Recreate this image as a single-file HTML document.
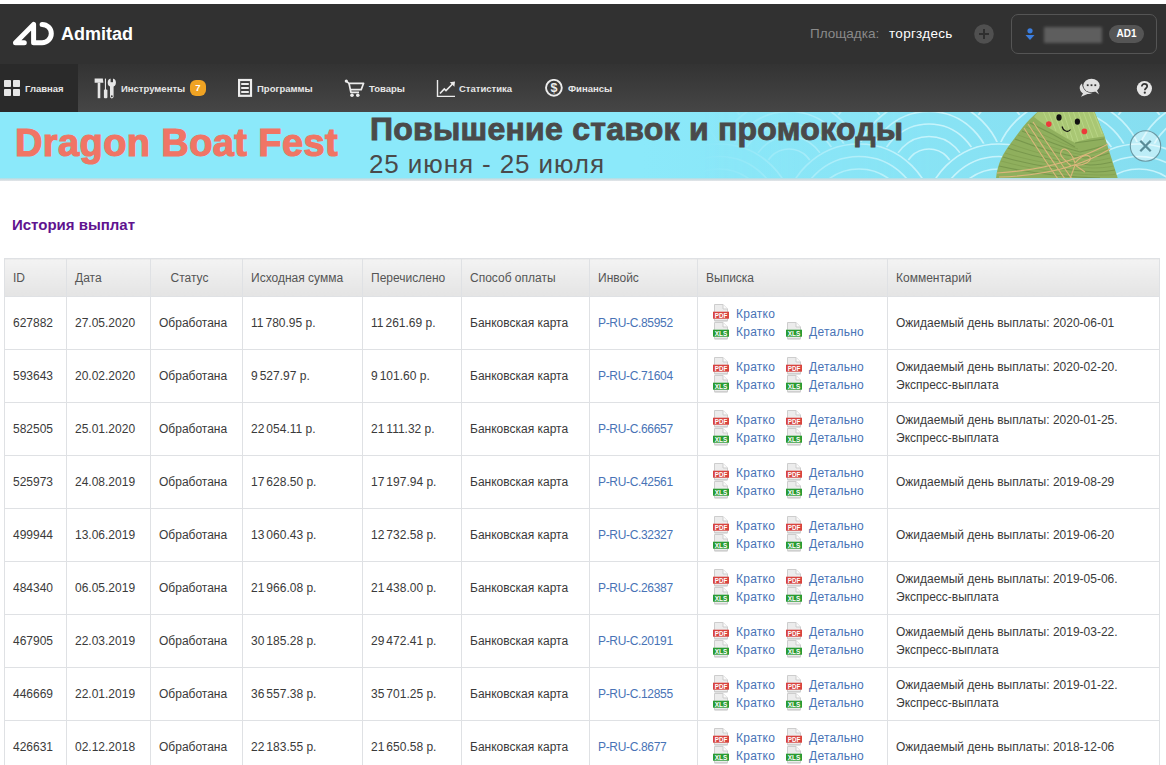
<!DOCTYPE html>
<html><head><meta charset="utf-8">
<style>
*{margin:0;padding:0;box-sizing:border-box}
html,body{width:1166px;height:765px;overflow:hidden;background:#fff;font-family:"Liberation Sans",sans-serif}
.abs{position:absolute;white-space:nowrap}
#top{position:absolute;left:0;top:4px;width:1166px;height:60px;background:#313131}
#nav{position:absolute;left:0;top:64px;width:1166px;height:48px;background:linear-gradient(#333,#464646)}
#navact{position:absolute;left:0;top:64px;width:78px;height:48px;background:#2a2a2a}
.nt{position:absolute;top:82.5px;font-size:9.5px;font-weight:bold;color:#e6e6e6;white-space:nowrap;line-height:12px}
#banner{position:absolute;left:0;top:112px;width:1166px;height:66px;background:#8be9fa;overflow:hidden}
#bline{position:absolute;left:0;top:178px;width:1166px;height:3px;background:linear-gradient(#a5e0ea,#d5dde1 60%,#e4e7ea)}
#title{position:absolute;left:12px;top:216px;font-size:15px;font-weight:bold;color:#60138f;white-space:nowrap}
table{position:absolute;left:4px;top:258px;border-collapse:collapse;font-size:12px;color:#3a3a3a}
td,th{border:1px solid #dfe1e4;padding:0 8px;text-align:left;font-weight:normal;white-space:nowrap}
th{height:38px;background:linear-gradient(#f3f3f3,#e4e4e4);color:#555}
th.c{padding-left:19.5px}
td{height:53px;line-height:18px}
a{color:#4873b6;text-decoration:none}
td>a{letter-spacing:-0.33px}
.ts{display:inline-block;width:2px}
td.vy{padding-left:15px}
.vl{height:18px;position:relative}
.vl span{position:absolute;top:0}
.vl .k{left:0}
.vl .d{left:73px}
.ic{position:absolute;left:0;top:-1px;width:16px;height:18px}
.vl a{position:absolute;left:23px;top:0;letter-spacing:0.25px}
</style></head><body>
<svg width="0" height="0" style="position:absolute"><defs>
<symbol id="pdf" viewBox="0 0 16 18"><path d="M1.5 0.5H10L14.5 5V16.8H1.5Z" fill="#ececec" stroke="#cdcdcd"/><path d="M10 0.5V5H14.5" fill="#fbfbfb" stroke="#cdcdcd"/><rect x="1.5" y="16.5" width="13" height="1" fill="#bbb" opacity="0.6"/><rect x="0" y="7.7" width="16" height="7" fill="#d8443f"/><text x="8" y="13.6" font-family="Liberation Sans" font-size="7" font-weight="bold" fill="#fff" text-anchor="middle" textLength="12.5" lengthAdjust="spacingAndGlyphs">PDF</text></symbol>
<symbol id="xls" viewBox="0 0 16 18"><path d="M1.5 0.5H10L14.5 5V16.8H1.5Z" fill="#ececec" stroke="#cdcdcd"/><path d="M10 0.5V5H14.5" fill="#fbfbfb" stroke="#cdcdcd"/><rect x="1.5" y="16.5" width="13" height="1" fill="#bbb" opacity="0.6"/><rect x="0" y="7.7" width="16" height="7" fill="#2a9b32"/><text x="8" y="13.6" font-family="Liberation Sans" font-size="7" font-weight="bold" fill="#fff" text-anchor="middle" textLength="12.5" lengthAdjust="spacingAndGlyphs">XLS</text></symbol>
</defs></svg>
<div id="top"></div>
<svg class="abs" style="left:0;top:0" width="60" height="60" viewBox="0 0 60 60"><path d="M24.3,42.8 L15.5,42.8 L33.6,24.4 L33.6,42.8 L42.1,42.8 A9.2,9.2 0 0 0 42.1,24.4" fill="none" stroke="#fff" stroke-width="5" stroke-linecap="round" stroke-linejoin="round"/></svg>
<div class="abs" style="left:61px;top:24px;font-size:18px;font-weight:bold;color:#fff;line-height:20px">Admitad</div>
<div class="abs" style="left:810px;top:27px;font-size:13.5px;color:#8a8a8a;line-height:14px">Площадка:</div>
<div class="abs" style="left:889px;top:27px;font-size:13.5px;color:#fff;line-height:14px;letter-spacing:0.3px">торгздесь</div>
<svg class="abs" style="left:974px;top:24px" width="20" height="20" viewBox="0 0 20 20"><circle cx="10" cy="10" r="9.8" fill="#505050"/><path d="M10 5V15M5 10H15" stroke="#2f2f2f" stroke-width="2"/></svg>
<div class="abs" style="left:1011px;top:14px;width:146px;height:40px;border:1px solid #555;border-radius:7px"></div>
<svg class="abs" style="left:1024px;top:26px" width="12" height="16" viewBox="0 0 12 16"><circle cx="6" cy="4.8" r="2.6" fill="#3b7ddd"/><path d="M1.5 8.9H10.5L6 14Z" fill="#3b7ddd"/></svg>
<div class="abs" style="left:1044px;top:27px;width:58px;height:16px;background:#5e5e5e;filter:blur(1.5px)"></div>
<div class="abs" style="left:1109px;top:25px;width:35px;height:18px;border-radius:9px;background:#555;color:#fff;font-size:10px;font-weight:bold;text-align:center;line-height:18px">AD1</div>

<div id="nav"></div>
<div id="navact"></div>
<svg class="abs" style="left:0;top:76px" width="24" height="24" viewBox="0 0 24 24" fill="#e6e6e6"><rect x="4" y="4" width="7" height="7" rx="0.8"/><rect x="13" y="4" width="7" height="7" rx="0.8"/><rect x="4" y="13" width="7" height="7" rx="0.8"/><rect x="13" y="13" width="7" height="7" rx="0.8"/></svg>
<div class="nt" style="left:25px">Главная</div>
<svg class="abs" style="left:92px;top:76px" width="26" height="24" viewBox="0 0 26 24" fill="#e6e6e6"><defs><mask id="wm"><rect width="26" height="24" fill="#fff"/><rect x="18.6" y="1" width="2.4" height="5.2" fill="#000"/><circle cx="19.8" cy="20.2" r="1" fill="#000"/></mask></defs><path d="M2.6 2.6H10.8L11.4 6.7H2.6Z"/><rect x="5.7" y="6.7" width="2.6" height="15.5"/><rect x="12.9" y="2.6" width="1.1" height="12"/><rect x="11.9" y="13.5" width="3.5" height="8.7" rx="1"/><g mask="url(#wm)"><circle cx="19.8" cy="6.7" r="4.1"/><rect x="18" y="8" width="3.6" height="14.4" rx="1.8"/></g></svg>
<div class="nt" style="left:121px">Инструменты</div>
<div class="abs" style="left:190px;top:80px;width:16px;height:16px;border-radius:6px;background:#f0a323;color:#fff;font-size:9.5px;font-weight:bold;text-align:center;line-height:16px">7</div>
<svg class="abs" style="left:236px;top:78px" width="18" height="20" viewBox="0 0 18 20"><rect x="3.1" y="2" width="11.9" height="15.8" fill="none" stroke="#ececec" stroke-width="2.2"/><path d="M5.2 5.9H12.8M5.2 10H12.8M5.2 14H12.8" stroke="#ececec" stroke-width="2"/></svg>
<div class="nt" style="left:257px">Программы</div>
<svg class="abs" style="left:344px;top:79px" width="21" height="19" viewBox="0 0 21 19"><g fill="none" stroke="#ececec" stroke-width="1.7" stroke-linejoin="round"><path d="M2.3 2.1L5 4.3H19.6L17.2 10.6H6.3"/><path d="M5 4.3L6.9 13.3H15"/></g><circle cx="2.3" cy="2.1" r="1.6" fill="#ececec"/><circle cx="8" cy="16.2" r="1.8" fill="#ececec"/><circle cx="13.8" cy="16.2" r="1.8" fill="#ececec"/></svg>
<div class="nt" style="left:369px">Товары</div>
<svg class="abs" style="left:436px;top:79px" width="20" height="19" viewBox="0 0 20 19"><path d="M1.5 1V17.4H19" fill="none" stroke="#ececec" stroke-width="1.4"/><path d="M4 14.5L8.3 9.9L10 11.6L16.5 5" fill="none" stroke="#ececec" stroke-width="1.6"/><path d="M13.8 3.2L19 2.6L18.4 7.8Z" fill="#ececec"/></svg>
<div class="nt" style="left:459px">Статистика</div>
<svg class="abs" style="left:544px;top:79px" width="20" height="19" viewBox="0 0 20 19"><circle cx="9.9" cy="8.8" r="7.9" fill="none" stroke="#ececec" stroke-width="1.9"/><text x="9.9" y="13.2" font-family="Liberation Sans" font-weight="bold" font-size="12.5" fill="#ececec" text-anchor="middle">$</text></svg>
<div class="nt" style="left:568px">Финансы</div>
<svg class="abs" style="left:1078px;top:78px" width="24" height="20" viewBox="0 0 24 20"><path d="M4 5.5C1.5 7 1 10 2.5 13C3.5 14.5 5 15.5 5 15.5L3 18.8L9.5 16C11.5 16 13 15.5 14.5 15C9 15 4.5 12 4 5.5Z" fill="#e0e0e0"/><ellipse cx="13.5" cy="7.5" rx="8.2" ry="6.8" fill="#e0e0e0"/><path d="M16 12.5L21 16.5L18.5 11.5Z" fill="#e0e0e0"/><rect x="8.8" y="6.3" width="1.8" height="1.8" fill="#333"/><rect x="12.6" y="6.3" width="1.8" height="1.8" fill="#333"/><rect x="16.4" y="6.3" width="1.8" height="1.8" fill="#333"/></svg>
<svg class="abs" style="left:1136px;top:80px" width="17" height="17" viewBox="0 0 17 17"><circle cx="8.4" cy="8.6" r="7.6" fill="#e6e6e6"/><path d="M5.8 6.6C5.8 4.9 7 3.9 8.5 3.9C10.1 3.9 11.2 4.9 11.2 6.3C11.2 8.2 8.8 8.3 8.8 10.3" fill="none" stroke="#333" stroke-width="1.7"/><circle cx="8.8" cy="12.7" r="1.1" fill="#333"/></svg>

<div id="banner">
<svg class="abs" style="left:0;top:0" width="1166" height="66" viewBox="0 112 1166 66">
<defs>
<linearGradient id="fadeg" x1="0" x2="1166" gradientUnits="userSpaceOnUse"><stop offset="0.6" stop-color="#fff" stop-opacity="0"/><stop offset="0.8" stop-color="#fff" stop-opacity="1"/></linearGradient>
<mask id="fadem"><rect x="0" y="100" width="1166" height="90" fill="url(#fadeg)"/></mask>
<linearGradient id="bgg" x1="0" x2="1166" gradientUnits="userSpaceOnUse"><stop offset="0.55" stop-color="#8be9fa"/><stop offset="1" stop-color="#86def0"/></linearGradient>
</defs>
<rect x="0" y="100" width="1166" height="90" fill="url(#bgg)"/>
<g mask="url(#fadem)"><circle cx="509" cy="84" r="77" fill="url(#bgg)"/><circle cx="509" cy="84" r="75" fill="none" stroke="#cdf5fc" stroke-width="1.7" stroke-opacity="0.9"/><circle cx="509" cy="84" r="62.5" fill="none" stroke="#cdf5fc" stroke-width="1.7" stroke-opacity="0.9"/><circle cx="509" cy="84" r="50" fill="none" stroke="#cdf5fc" stroke-width="1.7" stroke-opacity="0.9"/><circle cx="509" cy="84" r="37.5" fill="none" stroke="#cdf5fc" stroke-width="1.7" stroke-opacity="0.9"/><circle cx="509" cy="84" r="25" fill="none" stroke="#cdf5fc" stroke-width="1.7" stroke-opacity="0.9"/><circle cx="649" cy="84" r="77" fill="url(#bgg)"/><circle cx="649" cy="84" r="75" fill="none" stroke="#cdf5fc" stroke-width="1.7" stroke-opacity="0.9"/><circle cx="649" cy="84" r="62.5" fill="none" stroke="#cdf5fc" stroke-width="1.7" stroke-opacity="0.9"/><circle cx="649" cy="84" r="50" fill="none" stroke="#cdf5fc" stroke-width="1.7" stroke-opacity="0.9"/><circle cx="649" cy="84" r="37.5" fill="none" stroke="#cdf5fc" stroke-width="1.7" stroke-opacity="0.9"/><circle cx="649" cy="84" r="25" fill="none" stroke="#cdf5fc" stroke-width="1.7" stroke-opacity="0.9"/><circle cx="789" cy="84" r="77" fill="url(#bgg)"/><circle cx="789" cy="84" r="75" fill="none" stroke="#cdf5fc" stroke-width="1.7" stroke-opacity="0.9"/><circle cx="789" cy="84" r="62.5" fill="none" stroke="#cdf5fc" stroke-width="1.7" stroke-opacity="0.9"/><circle cx="789" cy="84" r="50" fill="none" stroke="#cdf5fc" stroke-width="1.7" stroke-opacity="0.9"/><circle cx="789" cy="84" r="37.5" fill="none" stroke="#cdf5fc" stroke-width="1.7" stroke-opacity="0.9"/><circle cx="789" cy="84" r="25" fill="none" stroke="#cdf5fc" stroke-width="1.7" stroke-opacity="0.9"/><circle cx="929" cy="84" r="77" fill="url(#bgg)"/><circle cx="929" cy="84" r="75" fill="none" stroke="#cdf5fc" stroke-width="1.7" stroke-opacity="0.9"/><circle cx="929" cy="84" r="62.5" fill="none" stroke="#cdf5fc" stroke-width="1.7" stroke-opacity="0.9"/><circle cx="929" cy="84" r="50" fill="none" stroke="#cdf5fc" stroke-width="1.7" stroke-opacity="0.9"/><circle cx="929" cy="84" r="37.5" fill="none" stroke="#cdf5fc" stroke-width="1.7" stroke-opacity="0.9"/><circle cx="929" cy="84" r="25" fill="none" stroke="#cdf5fc" stroke-width="1.7" stroke-opacity="0.9"/><circle cx="1069" cy="84" r="77" fill="url(#bgg)"/><circle cx="1069" cy="84" r="75" fill="none" stroke="#cdf5fc" stroke-width="1.7" stroke-opacity="0.9"/><circle cx="1069" cy="84" r="62.5" fill="none" stroke="#cdf5fc" stroke-width="1.7" stroke-opacity="0.9"/><circle cx="1069" cy="84" r="50" fill="none" stroke="#cdf5fc" stroke-width="1.7" stroke-opacity="0.9"/><circle cx="1069" cy="84" r="37.5" fill="none" stroke="#cdf5fc" stroke-width="1.7" stroke-opacity="0.9"/><circle cx="1069" cy="84" r="25" fill="none" stroke="#cdf5fc" stroke-width="1.7" stroke-opacity="0.9"/><circle cx="1209" cy="84" r="77" fill="url(#bgg)"/><circle cx="1209" cy="84" r="75" fill="none" stroke="#cdf5fc" stroke-width="1.7" stroke-opacity="0.9"/><circle cx="1209" cy="84" r="62.5" fill="none" stroke="#cdf5fc" stroke-width="1.7" stroke-opacity="0.9"/><circle cx="1209" cy="84" r="50" fill="none" stroke="#cdf5fc" stroke-width="1.7" stroke-opacity="0.9"/><circle cx="1209" cy="84" r="37.5" fill="none" stroke="#cdf5fc" stroke-width="1.7" stroke-opacity="0.9"/><circle cx="1209" cy="84" r="25" fill="none" stroke="#cdf5fc" stroke-width="1.7" stroke-opacity="0.9"/><circle cx="579" cy="129" r="77" fill="url(#bgg)"/><circle cx="579" cy="129" r="75" fill="none" stroke="#cdf5fc" stroke-width="1.7" stroke-opacity="0.9"/><circle cx="579" cy="129" r="62.5" fill="none" stroke="#cdf5fc" stroke-width="1.7" stroke-opacity="0.9"/><circle cx="579" cy="129" r="50" fill="none" stroke="#cdf5fc" stroke-width="1.7" stroke-opacity="0.9"/><circle cx="579" cy="129" r="37.5" fill="none" stroke="#cdf5fc" stroke-width="1.7" stroke-opacity="0.9"/><circle cx="579" cy="129" r="25" fill="none" stroke="#cdf5fc" stroke-width="1.7" stroke-opacity="0.9"/><circle cx="719" cy="129" r="77" fill="url(#bgg)"/><circle cx="719" cy="129" r="75" fill="none" stroke="#cdf5fc" stroke-width="1.7" stroke-opacity="0.9"/><circle cx="719" cy="129" r="62.5" fill="none" stroke="#cdf5fc" stroke-width="1.7" stroke-opacity="0.9"/><circle cx="719" cy="129" r="50" fill="none" stroke="#cdf5fc" stroke-width="1.7" stroke-opacity="0.9"/><circle cx="719" cy="129" r="37.5" fill="none" stroke="#cdf5fc" stroke-width="1.7" stroke-opacity="0.9"/><circle cx="719" cy="129" r="25" fill="none" stroke="#cdf5fc" stroke-width="1.7" stroke-opacity="0.9"/><circle cx="859" cy="129" r="77" fill="url(#bgg)"/><circle cx="859" cy="129" r="75" fill="none" stroke="#cdf5fc" stroke-width="1.7" stroke-opacity="0.9"/><circle cx="859" cy="129" r="62.5" fill="none" stroke="#cdf5fc" stroke-width="1.7" stroke-opacity="0.9"/><circle cx="859" cy="129" r="50" fill="none" stroke="#cdf5fc" stroke-width="1.7" stroke-opacity="0.9"/><circle cx="859" cy="129" r="37.5" fill="none" stroke="#cdf5fc" stroke-width="1.7" stroke-opacity="0.9"/><circle cx="859" cy="129" r="25" fill="none" stroke="#cdf5fc" stroke-width="1.7" stroke-opacity="0.9"/><circle cx="999" cy="129" r="77" fill="url(#bgg)"/><circle cx="999" cy="129" r="75" fill="none" stroke="#cdf5fc" stroke-width="1.7" stroke-opacity="0.9"/><circle cx="999" cy="129" r="62.5" fill="none" stroke="#cdf5fc" stroke-width="1.7" stroke-opacity="0.9"/><circle cx="999" cy="129" r="50" fill="none" stroke="#cdf5fc" stroke-width="1.7" stroke-opacity="0.9"/><circle cx="999" cy="129" r="37.5" fill="none" stroke="#cdf5fc" stroke-width="1.7" stroke-opacity="0.9"/><circle cx="999" cy="129" r="25" fill="none" stroke="#cdf5fc" stroke-width="1.7" stroke-opacity="0.9"/><circle cx="1139" cy="129" r="77" fill="url(#bgg)"/><circle cx="1139" cy="129" r="75" fill="none" stroke="#cdf5fc" stroke-width="1.7" stroke-opacity="0.9"/><circle cx="1139" cy="129" r="62.5" fill="none" stroke="#cdf5fc" stroke-width="1.7" stroke-opacity="0.9"/><circle cx="1139" cy="129" r="50" fill="none" stroke="#cdf5fc" stroke-width="1.7" stroke-opacity="0.9"/><circle cx="1139" cy="129" r="37.5" fill="none" stroke="#cdf5fc" stroke-width="1.7" stroke-opacity="0.9"/><circle cx="1139" cy="129" r="25" fill="none" stroke="#cdf5fc" stroke-width="1.7" stroke-opacity="0.9"/><circle cx="1279" cy="129" r="77" fill="url(#bgg)"/><circle cx="1279" cy="129" r="75" fill="none" stroke="#cdf5fc" stroke-width="1.7" stroke-opacity="0.9"/><circle cx="1279" cy="129" r="62.5" fill="none" stroke="#cdf5fc" stroke-width="1.7" stroke-opacity="0.9"/><circle cx="1279" cy="129" r="50" fill="none" stroke="#cdf5fc" stroke-width="1.7" stroke-opacity="0.9"/><circle cx="1279" cy="129" r="37.5" fill="none" stroke="#cdf5fc" stroke-width="1.7" stroke-opacity="0.9"/><circle cx="1279" cy="129" r="25" fill="none" stroke="#cdf5fc" stroke-width="1.7" stroke-opacity="0.9"/><circle cx="509" cy="174" r="77" fill="url(#bgg)"/><circle cx="509" cy="174" r="75" fill="none" stroke="#cdf5fc" stroke-width="1.7" stroke-opacity="0.9"/><circle cx="509" cy="174" r="62.5" fill="none" stroke="#cdf5fc" stroke-width="1.7" stroke-opacity="0.9"/><circle cx="509" cy="174" r="50" fill="none" stroke="#cdf5fc" stroke-width="1.7" stroke-opacity="0.9"/><circle cx="509" cy="174" r="37.5" fill="none" stroke="#cdf5fc" stroke-width="1.7" stroke-opacity="0.9"/><circle cx="509" cy="174" r="25" fill="none" stroke="#cdf5fc" stroke-width="1.7" stroke-opacity="0.9"/><circle cx="649" cy="174" r="77" fill="url(#bgg)"/><circle cx="649" cy="174" r="75" fill="none" stroke="#cdf5fc" stroke-width="1.7" stroke-opacity="0.9"/><circle cx="649" cy="174" r="62.5" fill="none" stroke="#cdf5fc" stroke-width="1.7" stroke-opacity="0.9"/><circle cx="649" cy="174" r="50" fill="none" stroke="#cdf5fc" stroke-width="1.7" stroke-opacity="0.9"/><circle cx="649" cy="174" r="37.5" fill="none" stroke="#cdf5fc" stroke-width="1.7" stroke-opacity="0.9"/><circle cx="649" cy="174" r="25" fill="none" stroke="#cdf5fc" stroke-width="1.7" stroke-opacity="0.9"/><circle cx="789" cy="174" r="77" fill="url(#bgg)"/><circle cx="789" cy="174" r="75" fill="none" stroke="#cdf5fc" stroke-width="1.7" stroke-opacity="0.9"/><circle cx="789" cy="174" r="62.5" fill="none" stroke="#cdf5fc" stroke-width="1.7" stroke-opacity="0.9"/><circle cx="789" cy="174" r="50" fill="none" stroke="#cdf5fc" stroke-width="1.7" stroke-opacity="0.9"/><circle cx="789" cy="174" r="37.5" fill="none" stroke="#cdf5fc" stroke-width="1.7" stroke-opacity="0.9"/><circle cx="789" cy="174" r="25" fill="none" stroke="#cdf5fc" stroke-width="1.7" stroke-opacity="0.9"/><circle cx="929" cy="174" r="77" fill="url(#bgg)"/><circle cx="929" cy="174" r="75" fill="none" stroke="#cdf5fc" stroke-width="1.7" stroke-opacity="0.9"/><circle cx="929" cy="174" r="62.5" fill="none" stroke="#cdf5fc" stroke-width="1.7" stroke-opacity="0.9"/><circle cx="929" cy="174" r="50" fill="none" stroke="#cdf5fc" stroke-width="1.7" stroke-opacity="0.9"/><circle cx="929" cy="174" r="37.5" fill="none" stroke="#cdf5fc" stroke-width="1.7" stroke-opacity="0.9"/><circle cx="929" cy="174" r="25" fill="none" stroke="#cdf5fc" stroke-width="1.7" stroke-opacity="0.9"/><circle cx="1069" cy="174" r="77" fill="url(#bgg)"/><circle cx="1069" cy="174" r="75" fill="none" stroke="#cdf5fc" stroke-width="1.7" stroke-opacity="0.9"/><circle cx="1069" cy="174" r="62.5" fill="none" stroke="#cdf5fc" stroke-width="1.7" stroke-opacity="0.9"/><circle cx="1069" cy="174" r="50" fill="none" stroke="#cdf5fc" stroke-width="1.7" stroke-opacity="0.9"/><circle cx="1069" cy="174" r="37.5" fill="none" stroke="#cdf5fc" stroke-width="1.7" stroke-opacity="0.9"/><circle cx="1069" cy="174" r="25" fill="none" stroke="#cdf5fc" stroke-width="1.7" stroke-opacity="0.9"/><circle cx="1209" cy="174" r="77" fill="url(#bgg)"/><circle cx="1209" cy="174" r="75" fill="none" stroke="#cdf5fc" stroke-width="1.7" stroke-opacity="0.9"/><circle cx="1209" cy="174" r="62.5" fill="none" stroke="#cdf5fc" stroke-width="1.7" stroke-opacity="0.9"/><circle cx="1209" cy="174" r="50" fill="none" stroke="#cdf5fc" stroke-width="1.7" stroke-opacity="0.9"/><circle cx="1209" cy="174" r="37.5" fill="none" stroke="#cdf5fc" stroke-width="1.7" stroke-opacity="0.9"/><circle cx="1209" cy="174" r="25" fill="none" stroke="#cdf5fc" stroke-width="1.7" stroke-opacity="0.9"/><circle cx="579" cy="219" r="77" fill="url(#bgg)"/><circle cx="579" cy="219" r="75" fill="none" stroke="#cdf5fc" stroke-width="1.7" stroke-opacity="0.9"/><circle cx="579" cy="219" r="62.5" fill="none" stroke="#cdf5fc" stroke-width="1.7" stroke-opacity="0.9"/><circle cx="579" cy="219" r="50" fill="none" stroke="#cdf5fc" stroke-width="1.7" stroke-opacity="0.9"/><circle cx="579" cy="219" r="37.5" fill="none" stroke="#cdf5fc" stroke-width="1.7" stroke-opacity="0.9"/><circle cx="579" cy="219" r="25" fill="none" stroke="#cdf5fc" stroke-width="1.7" stroke-opacity="0.9"/><circle cx="719" cy="219" r="77" fill="url(#bgg)"/><circle cx="719" cy="219" r="75" fill="none" stroke="#cdf5fc" stroke-width="1.7" stroke-opacity="0.9"/><circle cx="719" cy="219" r="62.5" fill="none" stroke="#cdf5fc" stroke-width="1.7" stroke-opacity="0.9"/><circle cx="719" cy="219" r="50" fill="none" stroke="#cdf5fc" stroke-width="1.7" stroke-opacity="0.9"/><circle cx="719" cy="219" r="37.5" fill="none" stroke="#cdf5fc" stroke-width="1.7" stroke-opacity="0.9"/><circle cx="719" cy="219" r="25" fill="none" stroke="#cdf5fc" stroke-width="1.7" stroke-opacity="0.9"/><circle cx="859" cy="219" r="77" fill="url(#bgg)"/><circle cx="859" cy="219" r="75" fill="none" stroke="#cdf5fc" stroke-width="1.7" stroke-opacity="0.9"/><circle cx="859" cy="219" r="62.5" fill="none" stroke="#cdf5fc" stroke-width="1.7" stroke-opacity="0.9"/><circle cx="859" cy="219" r="50" fill="none" stroke="#cdf5fc" stroke-width="1.7" stroke-opacity="0.9"/><circle cx="859" cy="219" r="37.5" fill="none" stroke="#cdf5fc" stroke-width="1.7" stroke-opacity="0.9"/><circle cx="859" cy="219" r="25" fill="none" stroke="#cdf5fc" stroke-width="1.7" stroke-opacity="0.9"/><circle cx="999" cy="219" r="77" fill="url(#bgg)"/><circle cx="999" cy="219" r="75" fill="none" stroke="#cdf5fc" stroke-width="1.7" stroke-opacity="0.9"/><circle cx="999" cy="219" r="62.5" fill="none" stroke="#cdf5fc" stroke-width="1.7" stroke-opacity="0.9"/><circle cx="999" cy="219" r="50" fill="none" stroke="#cdf5fc" stroke-width="1.7" stroke-opacity="0.9"/><circle cx="999" cy="219" r="37.5" fill="none" stroke="#cdf5fc" stroke-width="1.7" stroke-opacity="0.9"/><circle cx="999" cy="219" r="25" fill="none" stroke="#cdf5fc" stroke-width="1.7" stroke-opacity="0.9"/><circle cx="1139" cy="219" r="77" fill="url(#bgg)"/><circle cx="1139" cy="219" r="75" fill="none" stroke="#cdf5fc" stroke-width="1.7" stroke-opacity="0.9"/><circle cx="1139" cy="219" r="62.5" fill="none" stroke="#cdf5fc" stroke-width="1.7" stroke-opacity="0.9"/><circle cx="1139" cy="219" r="50" fill="none" stroke="#cdf5fc" stroke-width="1.7" stroke-opacity="0.9"/><circle cx="1139" cy="219" r="37.5" fill="none" stroke="#cdf5fc" stroke-width="1.7" stroke-opacity="0.9"/><circle cx="1139" cy="219" r="25" fill="none" stroke="#cdf5fc" stroke-width="1.7" stroke-opacity="0.9"/><circle cx="1279" cy="219" r="77" fill="url(#bgg)"/><circle cx="1279" cy="219" r="75" fill="none" stroke="#cdf5fc" stroke-width="1.7" stroke-opacity="0.9"/><circle cx="1279" cy="219" r="62.5" fill="none" stroke="#cdf5fc" stroke-width="1.7" stroke-opacity="0.9"/><circle cx="1279" cy="219" r="50" fill="none" stroke="#cdf5fc" stroke-width="1.7" stroke-opacity="0.9"/><circle cx="1279" cy="219" r="37.5" fill="none" stroke="#cdf5fc" stroke-width="1.7" stroke-opacity="0.9"/><circle cx="1279" cy="219" r="25" fill="none" stroke="#cdf5fc" stroke-width="1.7" stroke-opacity="0.9"/></g>
<g>
<path d="M1038.5 111H1094.2L1104.6 136.6L1118 179H996C997 165 1003 153 1011 143C1017 135 1023 126 1030 119Z" fill="#8faf5d"/>
<path d="M1038.5 111H1094.2L1104.6 136.6C1093 138 1082 140 1075 143C1062 136 1048 128 1034 117Z" fill="#a9c774"/>
<g stroke="#bcd88a" stroke-width="0.9" opacity="0.9"><path d="M1043 111L1050 127M1048 111L1056 131M1053 111L1062 134M1058 111L1068 138M1063 111L1073 141M1068 111L1078 141M1073 111L1083 140M1078 111L1088 139M1083 111L1093 138M1088 111L1098 137M1093 111L1102 134"/></g>
<g stroke="#76954a" stroke-width="1.1" fill="none" opacity="0.9"><path d="M1030 123C1045 130 1060 138 1075 147M1022 131C1040 138 1060 147 1080 152C1090 150 1100 147 1106 145M1015 139C1035 147 1060 155 1085 158C1095 157 1105 155 1109 153M1008 148C1030 156 1060 162 1090 165C1100 165 1108 163 1112 162M1003 157C1030 165 1060 170 1095 172C1105 172 1110 171 1115 170M999 166C1030 173 1060 177 1100 178M1075 143C1085 142 1095 140 1104 139"/></g>
<g stroke="#809f4f" stroke-width="0.9" fill="none" opacity="0.8"><path d="M1026 127C1042 134 1060 143 1078 149M1018 135C1038 142 1060 151 1083 155C1093 154 1102 151 1108 149M1011 144C1032 152 1060 159 1088 162C1098 161 1106 159 1110 158M1005 153C1030 161 1060 166 1092 168C1102 168 1110 167 1113 166M1001 161C1030 169 1060 174 1098 175C1106 175 1112 175 1116 174"/></g>
<g stroke="#dbb67c" stroke-width="1.1" fill="none"><path d="M1024 128C1035 145 1048 165 1058 179M1028 124C1040 142 1053 162 1065 179M1033 122C1045 140 1060 162 1072 179M997 173C1030 171 1070 165 1108 144M999 177C1035 176 1075 170 1110 149"/><path d="M1071 166C1063 158 1058 155 1062 150C1066 146 1073 155 1075 163C1081 156 1087 153 1090 157C1092 162 1082 166 1075 165L1070 179M1075 165L1085 172"/></g>
<ellipse cx="1059" cy="117.5" rx="2.6" ry="3.2" fill="#111"/><ellipse cx="1077.4" cy="121.6" rx="2.6" ry="3.2" fill="#111"/>
<circle cx="1048.8" cy="124.1" r="2.8" fill="#ec3a3a"/><circle cx="1084.4" cy="131.4" r="2.8" fill="#ec3a3a"/>
<path d="M1062 126.5C1063 131 1068 133 1070.5 129.5" stroke="#111" stroke-width="1.2" fill="none"/>
</g>

<circle cx="1145.5" cy="146" r="15.2" fill="#fff" fill-opacity="0.45" stroke="#6a98a3" stroke-width="1.1"/>
<path d="M1140.3 140.8L1150.7 151.2M1150.7 140.8L1140.3 151.2" stroke="#5a8c98" stroke-width="2.3"/>
</svg>
<div class="abs" style="left:15px;top:9px;font-size:38px;font-weight:bold;color:#f07565;line-height:44px;letter-spacing:0.4px;-webkit-text-stroke:1.2px #f07565">Dragon Boat Fest</div>
<div class="abs" style="left:370px;top:0px;font-size:32px;font-weight:bold;color:#4a4a4a;line-height:34px;letter-spacing:0.25px;-webkit-text-stroke:0.9px #4a4a4a">Повышение ставок и промокоды</div>
<div class="abs" style="left:369px;top:38px;font-size:26px;color:#4a4a4a;line-height:29px;letter-spacing:0.9px">25 июня - 25 июля</div>
</div>
<div id="bline"></div>
<div id="title">История выплат</div>
<table id="tbl">
<tr><th style="width:62px">ID</th><th style="width:84px">Дата</th><th class="c" style="width:92px">Статус</th><th style="width:120px">Исходная сумма</th><th style="width:99px">Перечислено</th><th style="width:128px">Способ оплаты</th><th style="width:108px">Инвойс</th><th style="width:190px">Выписка</th><th style="width:272px">Комментарий</th></tr>
<tr><td>627882</td><td>27.05.2020</td><td>Обработана</td><td>11<span class="ts"></span>780.95 р.</td><td>11<span class="ts"></span>261.69 р.</td><td>Банковская карта</td><td><a>P-RU-C.85952</a></td><td class="vy"><div class="vl"><span class="k"><svg class="ic"><use href="#pdf"/></svg><a>Кратко</a></span></div><div class="vl"><span class="k"><svg class="ic"><use href="#xls"/></svg><a>Кратко</a></span><span class="d"><svg class="ic"><use href="#xls"/></svg><a>Детально</a></span></div></td><td class="cm">Ожидаемый день выплаты: 2020-06-01</td></tr>
<tr><td>593643</td><td>20.02.2020</td><td>Обработана</td><td>9<span class="ts"></span>527.97 р.</td><td>9<span class="ts"></span>101.60 р.</td><td>Банковская карта</td><td><a>P-RU-C.71604</a></td><td class="vy"><div class="vl"><span class="k"><svg class="ic"><use href="#pdf"/></svg><a>Кратко</a></span><span class="d"><svg class="ic"><use href="#pdf"/></svg><a>Детально</a></span></div><div class="vl"><span class="k"><svg class="ic"><use href="#xls"/></svg><a>Кратко</a></span><span class="d"><svg class="ic"><use href="#xls"/></svg><a>Детально</a></span></div></td><td class="cm">Ожидаемый день выплаты: 2020-02-20.<br>Экспресс-выплата</td></tr>
<tr><td>582505</td><td>25.01.2020</td><td>Обработана</td><td>22<span class="ts"></span>054.11 р.</td><td>21<span class="ts"></span>111.32 р.</td><td>Банковская карта</td><td><a>P-RU-C.66657</a></td><td class="vy"><div class="vl"><span class="k"><svg class="ic"><use href="#pdf"/></svg><a>Кратко</a></span><span class="d"><svg class="ic"><use href="#pdf"/></svg><a>Детально</a></span></div><div class="vl"><span class="k"><svg class="ic"><use href="#xls"/></svg><a>Кратко</a></span><span class="d"><svg class="ic"><use href="#xls"/></svg><a>Детально</a></span></div></td><td class="cm">Ожидаемый день выплаты: 2020-01-25.<br>Экспресс-выплата</td></tr>
<tr><td>525973</td><td>24.08.2019</td><td>Обработана</td><td>17<span class="ts"></span>628.50 р.</td><td>17<span class="ts"></span>197.94 р.</td><td>Банковская карта</td><td><a>P-RU-C.42561</a></td><td class="vy"><div class="vl"><span class="k"><svg class="ic"><use href="#pdf"/></svg><a>Кратко</a></span><span class="d"><svg class="ic"><use href="#pdf"/></svg><a>Детально</a></span></div><div class="vl"><span class="k"><svg class="ic"><use href="#xls"/></svg><a>Кратко</a></span><span class="d"><svg class="ic"><use href="#xls"/></svg><a>Детально</a></span></div></td><td class="cm">Ожидаемый день выплаты: 2019-08-29</td></tr>
<tr><td>499944</td><td>13.06.2019</td><td>Обработана</td><td>13<span class="ts"></span>060.43 р.</td><td>12<span class="ts"></span>732.58 р.</td><td>Банковская карта</td><td><a>P-RU-C.32327</a></td><td class="vy"><div class="vl"><span class="k"><svg class="ic"><use href="#pdf"/></svg><a>Кратко</a></span><span class="d"><svg class="ic"><use href="#pdf"/></svg><a>Детально</a></span></div><div class="vl"><span class="k"><svg class="ic"><use href="#xls"/></svg><a>Кратко</a></span><span class="d"><svg class="ic"><use href="#xls"/></svg><a>Детально</a></span></div></td><td class="cm">Ожидаемый день выплаты: 2019-06-20</td></tr>
<tr><td>484340</td><td>06.05.2019</td><td>Обработана</td><td>21<span class="ts"></span>966.08 р.</td><td>21<span class="ts"></span>438.00 р.</td><td>Банковская карта</td><td><a>P-RU-C.26387</a></td><td class="vy"><div class="vl"><span class="k"><svg class="ic"><use href="#pdf"/></svg><a>Кратко</a></span><span class="d"><svg class="ic"><use href="#pdf"/></svg><a>Детально</a></span></div><div class="vl"><span class="k"><svg class="ic"><use href="#xls"/></svg><a>Кратко</a></span><span class="d"><svg class="ic"><use href="#xls"/></svg><a>Детально</a></span></div></td><td class="cm">Ожидаемый день выплаты: 2019-05-06.<br>Экспресс-выплата</td></tr>
<tr><td>467905</td><td>22.03.2019</td><td>Обработана</td><td>30<span class="ts"></span>185.28 р.</td><td>29<span class="ts"></span>472.41 р.</td><td>Банковская карта</td><td><a>P-RU-C.20191</a></td><td class="vy"><div class="vl"><span class="k"><svg class="ic"><use href="#pdf"/></svg><a>Кратко</a></span><span class="d"><svg class="ic"><use href="#pdf"/></svg><a>Детально</a></span></div><div class="vl"><span class="k"><svg class="ic"><use href="#xls"/></svg><a>Кратко</a></span><span class="d"><svg class="ic"><use href="#xls"/></svg><a>Детально</a></span></div></td><td class="cm">Ожидаемый день выплаты: 2019-03-22.<br>Экспресс-выплата</td></tr>
<tr><td>446669</td><td>22.01.2019</td><td>Обработана</td><td>36<span class="ts"></span>557.38 р.</td><td>35<span class="ts"></span>701.25 р.</td><td>Банковская карта</td><td><a>P-RU-C.12855</a></td><td class="vy"><div class="vl"><span class="k"><svg class="ic"><use href="#pdf"/></svg><a>Кратко</a></span><span class="d"><svg class="ic"><use href="#pdf"/></svg><a>Детально</a></span></div><div class="vl"><span class="k"><svg class="ic"><use href="#xls"/></svg><a>Кратко</a></span><span class="d"><svg class="ic"><use href="#xls"/></svg><a>Детально</a></span></div></td><td class="cm">Ожидаемый день выплаты: 2019-01-22.<br>Экспресс-выплата</td></tr>
<tr><td>426631</td><td>02.12.2018</td><td>Обработана</td><td>22<span class="ts"></span>183.55 р.</td><td>21<span class="ts"></span>650.58 р.</td><td>Банковская карта</td><td><a>P-RU-C.8677</a></td><td class="vy"><div class="vl"><span class="k"><svg class="ic"><use href="#pdf"/></svg><a>Кратко</a></span><span class="d"><svg class="ic"><use href="#pdf"/></svg><a>Детально</a></span></div><div class="vl"><span class="k"><svg class="ic"><use href="#xls"/></svg><a>Кратко</a></span><span class="d"><svg class="ic"><use href="#xls"/></svg><a>Детально</a></span></div></td><td class="cm">Ожидаемый день выплаты: 2018-12-06</td></tr>
</table>
</body></html>
